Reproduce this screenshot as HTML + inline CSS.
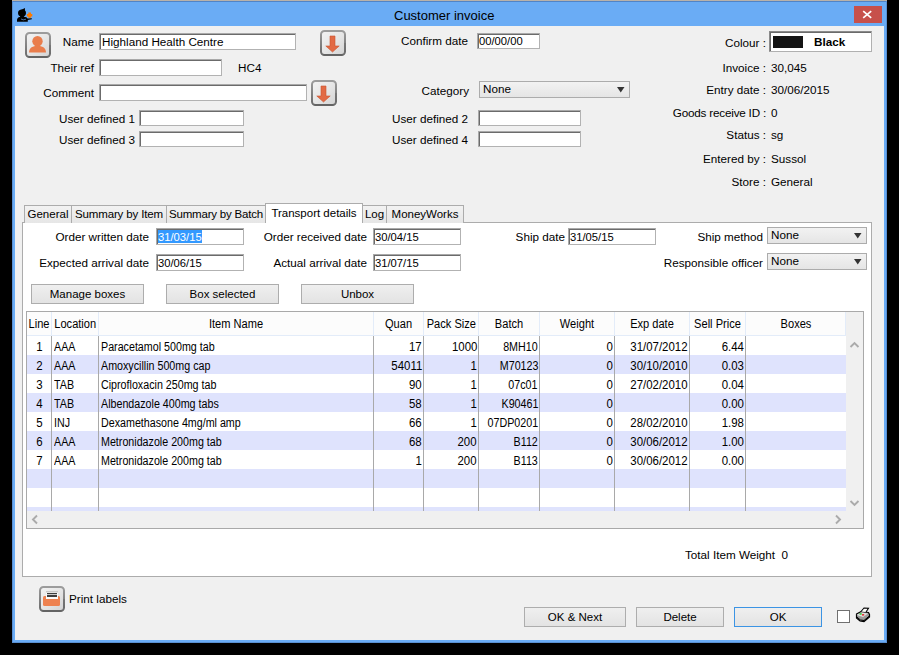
<!DOCTYPE html>
<html><head><meta charset="utf-8">
<style>
html,body{margin:0;padding:0;}
body{width:899px;height:655px;background:#000;position:relative;overflow:hidden;font-family:"Liberation Sans",sans-serif;}
#win{position:absolute;left:12px;top:0;width:875px;height:643px;background:#6aacf5;}
#topline{position:absolute;left:12px;top:0;width:875px;height:1px;background:#b9b2aa;}
#client{position:absolute;left:15px;top:26px;width:869px;height:614px;background:#f0f0f0;}
.a{position:absolute;}
.t{position:absolute;font-size:11.7px;line-height:14px;white-space:pre;color:#000;}
.r{text-align:right;}
.inp{position:absolute;box-sizing:border-box;background:#fff;border:1px solid #b2b2b2;border-top-color:#a9a9a9;border-left-color:#a9a9a9;box-shadow:inset 1px 1px 0 #6b6b6b;}
.dd{position:absolute;box-sizing:border-box;border:1px solid #acacac;background:linear-gradient(#f2f2f2,#e5e5e5);}
.dd .arr{position:absolute;width:0;height:0;border-left:3.5px solid transparent;border-right:3.5px solid transparent;border-top:5px solid #333;}
.btn{position:absolute;box-sizing:border-box;border:1px solid #adadad;background:linear-gradient(#efefef,#e3e3e3);font-size:11.5px;text-align:center;white-space:pre;}
.ib{position:absolute;box-sizing:border-box;width:26px;height:26px;border-radius:4px;border:2px solid #787878;border-bottom-color:#5a5a5a;border-right-color:#8a8a8a;background:linear-gradient(135deg,#f0f0f0 0%,#e4e4e4 50%,#d6d6d6 100%);}
.tab{position:absolute;box-sizing:border-box;top:205px;height:18px;border:1px solid #acacac;border-bottom:none;background:linear-gradient(#f2f2f2,#e6e6e6);font-size:11.5px;line-height:16px;white-space:pre;text-align:center;}
.tbl{position:absolute;font-size:11px;white-space:pre;}
.th{position:absolute;font-size:12.3px;line-height:14px;white-space:pre;text-align:center;transform:scaleX(0.9);}
.td{position:absolute;font-size:12.3px;line-height:14px;white-space:pre;transform:scaleX(0.87);}
.td.n{transform:scaleX(0.93);}
</style></head><body>
<div id="win"></div>
<div id="topline"></div>
<div class="a" style="left:12px;top:1px;width:875px;height:1px;background:#5184c6;"></div>
<div class="a" style="left:12px;top:1px;width:1px;height:642px;background:#5a90d2;"></div>
<div class="a" style="left:886px;top:1px;width:1px;height:642px;background:#5a90d2;"></div>
<div class="a" style="left:12px;top:642px;width:875px;height:1px;background:#5a90d2;"></div>
<div id="client"></div>

<!-- title bar -->
<svg class="a" style="left:14px;top:4px" width="24" height="22"><ellipse cx="8" cy="9" rx="4" ry="3.6" fill="#000"/><path d="M6 6.5 L11 4 L10.8 7.5 Z" fill="#000"/><path d="M6.2 12 L9.8 12 L10.2 13.2 L6 13.2 Z" fill="#000"/><path d="M3 17.8 L3 15.8 Q3.5 13 7 12.8 L10 12.8 Q13 13 13.6 14.5 L17.8 14.2 L17.8 15.2 L13.8 16 L13.8 17.8 Z" fill="#000"/><path d="M7 15 Q9 16.6 12 15.2" fill="none" stroke="#5a88c8" stroke-width="0.8"/><path d="M14.3 8.6 H17 V9.9 H18.3 V12.6 H17 V13.8 H14.3 V12.6 H12.9 V9.9 H14.3 Z" fill="#ff7b00"/></svg>
<div class="t" style="left:394px;top:7px;font-size:13px;line-height:17px;">Customer invoice</div>
<div class="a" style="left:854px;top:6px;width:28px;height:17px;background:#c7504b;"></div>
<svg class="a" style="left:854px;top:6px" width="28" height="17"><path d="M9.2 5.2 L17.2 11.8 M17.2 5.2 L9.2 11.8" stroke="#fff" stroke-width="1.7"/></svg>

<!-- header left -->
<div class="a" style="left:25px;top:32px;width:26px;height:26px;"><svg width="26" height="26" style="position:absolute;left:0;top:0"><defs><linearGradient id="bg" x1="0" y1="0" x2="1" y2="1"><stop offset="0" stop-color="#f3f3f3"/><stop offset="0.5" stop-color="#e6e6e6"/><stop offset="1" stop-color="#d3d3d3"/></linearGradient></defs><linearGradient id="sg" x1="0" y1="0" x2="0" y2="1"><stop offset="0" stop-color="#9c9c9c"/><stop offset="1" stop-color="#6a6a6a"/></linearGradient><rect x="1" y="1" width="24" height="24" rx="3.5" fill="url(#bg)" stroke="url(#sg)" stroke-width="2"/><path d="M3.5 25 H22.5" stroke="#5e5e5e" stroke-width="1"/><path d="M25 13 V22" stroke="#6a6a6a" stroke-width="1"/><circle cx="12.5" cy="9.2" r="5.2" fill="#e97d4c"/><path d="M4 20.6 C4 15.8 8 13.8 12.5 13.8 C17 13.8 21 15.8 21 20.6 Z" fill="#e97d4c"/></svg></div>
<div class="t r" style="left:0;width:94px;top:35px;">Name</div>
<div class="inp" style="left:99px;top:33px;width:197px;height:17px;"></div>
<div class="t" style="left:102px;top:35px;">Highland Health Centre</div>
<div class="a" style="left:320px;top:30px;width:26px;height:26px;"><svg width="26" height="26" style="position:absolute;left:0;top:0"><defs><linearGradient id="bg" x1="0" y1="0" x2="1" y2="1"><stop offset="0" stop-color="#f3f3f3"/><stop offset="0.5" stop-color="#e6e6e6"/><stop offset="1" stop-color="#d3d3d3"/></linearGradient></defs><linearGradient id="sg" x1="0" y1="0" x2="0" y2="1"><stop offset="0" stop-color="#9c9c9c"/><stop offset="1" stop-color="#6a6a6a"/></linearGradient><rect x="1" y="1" width="24" height="24" rx="3.5" fill="url(#bg)" stroke="url(#sg)" stroke-width="2"/><path d="M3.5 25 H22.5" stroke="#5e5e5e" stroke-width="1"/><path d="M25 13 V22" stroke="#6a6a6a" stroke-width="1"/><path d="M10 6 H15 V16 H19.2 L12.5 22 L5.8 16 H10 Z" fill="#e26a45" stroke="#c9542f" stroke-width="0.6" stroke-linejoin="round"/></svg></div>
<div class="t r" style="left:0;width:94px;top:61px;">Their ref</div>
<div class="inp" style="left:99px;top:59px;width:123px;height:17px;"></div>
<div class="t" style="left:238px;top:61px;">HC4</div>
<div class="t r" style="left:0;width:94px;top:86px;">Comment</div>
<div class="inp" style="left:99px;top:84px;width:208px;height:17px;"></div>
<div class="a" style="left:311px;top:80px;width:26px;height:26px;"><svg width="26" height="26" style="position:absolute;left:0;top:0"><defs><linearGradient id="bg" x1="0" y1="0" x2="1" y2="1"><stop offset="0" stop-color="#f3f3f3"/><stop offset="0.5" stop-color="#e6e6e6"/><stop offset="1" stop-color="#d3d3d3"/></linearGradient></defs><linearGradient id="sg" x1="0" y1="0" x2="0" y2="1"><stop offset="0" stop-color="#9c9c9c"/><stop offset="1" stop-color="#6a6a6a"/></linearGradient><rect x="1" y="1" width="24" height="24" rx="3.5" fill="url(#bg)" stroke="url(#sg)" stroke-width="2"/><path d="M3.5 25 H22.5" stroke="#5e5e5e" stroke-width="1"/><path d="M25 13 V22" stroke="#6a6a6a" stroke-width="1"/><path d="M10 6 H15 V16 H19.2 L12.5 22 L5.8 16 H10 Z" fill="#e26a45" stroke="#c9542f" stroke-width="0.6" stroke-linejoin="round"/></svg></div>
<div class="t r" style="left:0;width:135px;top:112px;">User defined 1</div>
<div class="inp" style="left:139px;top:110px;width:105px;height:16px;"></div>
<div class="t r" style="left:0;width:135px;top:133px;">User defined 3</div>
<div class="inp" style="left:139px;top:131px;width:105px;height:16px;"></div>

<!-- header middle -->
<div class="t r" style="left:300px;width:168px;top:34px;">Confirm date</div>
<div class="inp" style="left:477px;top:33px;width:63px;height:16px;"></div>
<div class="t" style="left:479px;top:34px;transform:scaleX(0.96);transform-origin:left;">00/00/00</div>
<div class="t r" style="left:300px;width:169px;top:84px;">Category</div>
<div class="dd" style="left:479px;top:81px;width:151px;height:17px;"><div class="t" style="left:3px;top:0px;">None</div><svg class="a" style="left:137px;top:5px" width="8" height="6"><path d="M0 0 H7.5 L3.75 5.5 Z" fill="#333"/></svg></div>
<div class="t r" style="left:300px;width:168px;top:112px;">User defined 2</div>
<div class="inp" style="left:478px;top:110px;width:103px;height:16px;"></div>
<div class="t r" style="left:300px;width:168px;top:133px;">User defined 4</div>
<div class="inp" style="left:478px;top:131px;width:103px;height:16px;"></div>

<!-- header right -->
<div class="t r" style="left:600px;width:166px;top:36px;">Colour :</div>
<div class="inp" style="left:769px;top:31px;width:103px;height:21px;border-top:1px solid #8a8a8a;border-left:1px solid #8a8a8a;border-right:1px solid #b0b0b0;border-bottom:1px solid #b0b0b0;"></div>
<div class="a" style="left:773px;top:36px;width:30px;height:12px;background:#141414;"></div>
<div class="t" style="left:814px;top:35px;font-weight:bold;">Black</div>
<div class="t r" style="left:600px;width:166px;top:61px;">Invoice :</div>
<div class="t" style="left:771px;top:61px;">30,045</div>
<div class="t r" style="left:600px;width:166px;top:83px;">Entry date :</div>
<div class="t" style="left:771px;top:83px;">30/06/2015</div>
<div class="t r" style="left:600px;width:166px;top:106px;letter-spacing:-0.2px;">Goods receive ID :</div>
<div class="t" style="left:771px;top:106px;">0</div>
<div class="t r" style="left:600px;width:166px;top:128px;">Status :</div>
<div class="t" style="left:771px;top:128px;">sg</div>
<div class="t r" style="left:600px;width:166px;top:152px;">Entered by :</div>
<div class="t" style="left:771px;top:152px;">Sussol</div>
<div class="t r" style="left:600px;width:166px;top:175px;">Store :</div>
<div class="t" style="left:771px;top:175px;">General</div>

<!-- tab panel -->
<div class="a" style="left:22px;top:222px;width:848px;height:353px;border:1px solid #acacac;background:#fff;"></div>
<div class="tab" style="left:24px;width:48px;">General</div>
<div class="tab" style="left:71px;width:96px;letter-spacing:-0.15px;">Summary by Item</div>
<div class="tab" style="left:166px;width:100px;letter-spacing:-0.2px;">Summary by Batch</div>
<div class="tab" style="left:386px;width:78px;">MoneyWorks</div>
<div class="tab" style="left:362px;width:25px;">Log</div>
<div class="tab" style="left:265px;top:203px;width:98px;height:20px;background:#fff;line-height:18px;">Transport details</div>

<!-- transport form -->
<div class="t r" style="left:0;width:149px;top:230px;">Order written date</div>
<div class="inp" style="left:156px;top:228px;width:88px;height:17px;"></div>
<div class="a" style="left:158px;top:230px;width:44px;height:13px;background:#3399ff;"></div>
<div class="t" style="left:158px;top:230px;color:#fff;transform:scaleX(0.96);transform-origin:left;">31/03/15</div>
<div class="t r" style="left:0;width:149px;top:256px;">Expected arrival date</div>
<div class="inp" style="left:156px;top:254px;width:88px;height:17px;"></div>
<div class="t" style="left:158px;top:256px;transform:scaleX(0.96);transform-origin:left;">30/06/15</div>
<div class="t r" style="left:200px;width:167px;top:230px;">Order received date</div>
<div class="inp" style="left:373px;top:228px;width:88px;height:17px;"></div>
<div class="t" style="left:375px;top:230px;transform:scaleX(0.96);transform-origin:left;">30/04/15</div>
<div class="t r" style="left:200px;width:167px;top:256px;">Actual arrival date</div>
<div class="inp" style="left:373px;top:254px;width:88px;height:17px;"></div>
<div class="t" style="left:375px;top:256px;transform:scaleX(0.96);transform-origin:left;">31/07/15</div>
<div class="t r" style="left:450px;width:115px;top:230px;">Ship date</div>
<div class="inp" style="left:568px;top:228px;width:88px;height:17px;"></div>
<div class="t" style="left:570px;top:230px;transform:scaleX(0.96);transform-origin:left;">31/05/15</div>
<div class="t r" style="left:600px;width:163px;top:230px;">Ship method</div>
<div class="dd" style="left:767px;top:227px;width:100px;height:17px;"><div class="t" style="left:3px;top:0px;">None</div><svg class="a" style="left:86px;top:5px" width="8" height="6"><path d="M0 0 H7.5 L3.75 5.5 Z" fill="#333"/></svg></div>
<div class="t r" style="left:600px;width:163px;top:256px;">Responsible officer</div>
<div class="dd" style="left:767px;top:253px;width:100px;height:17px;"><div class="t" style="left:3px;top:0px;">None</div><svg class="a" style="left:86px;top:5px" width="8" height="6"><path d="M0 0 H7.5 L3.75 5.5 Z" fill="#333"/></svg></div>

<div class="btn" style="left:31px;top:284px;width:113px;height:20px;line-height:18px;">Manage boxes</div>
<div class="btn" style="left:166px;top:284px;width:113px;height:20px;line-height:18px;">Box selected</div>
<div class="btn" style="left:301px;top:284px;width:113px;height:20px;line-height:18px;">Unbox</div>

<!-- table -->
<div class="a" style="left:26px;top:311px;width:836px;height:216px;border:1px solid #a9a9a9;background:#fff;"></div>
<div class="a" style="left:27px;top:312px;width:819px;height:23px;background:#fcfcfc;"></div>
<div class="a" style="left:27px;top:335px;width:819px;height:1px;background:#e3ecf9;"></div>
<div class="a" style="left:27px;top:355px;width:819px;height:19px;background:#dfe3fd;"></div>
<div class="a" style="left:27px;top:393px;width:819px;height:19px;background:#dfe3fd;"></div>
<div class="a" style="left:27px;top:431px;width:819px;height:19px;background:#dfe3fd;"></div>
<div class="a" style="left:27px;top:469px;width:819px;height:19px;background:#dfe3fd;"></div>
<div class="a" style="left:27px;top:507px;width:819px;height:4px;background:#dfe3fd;"></div>
<div class="a" style="left:51px;top:312px;width:1px;height:23px;background:#e3ecf9;"></div>
<div class="a" style="left:98px;top:312px;width:1px;height:23px;background:#e3ecf9;"></div>
<div class="a" style="left:373px;top:312px;width:1px;height:23px;background:#e3ecf9;"></div>
<div class="a" style="left:423px;top:312px;width:1px;height:23px;background:#e3ecf9;"></div>
<div class="a" style="left:478px;top:312px;width:1px;height:23px;background:#e3ecf9;"></div>
<div class="a" style="left:539px;top:312px;width:1px;height:23px;background:#e3ecf9;"></div>
<div class="a" style="left:614px;top:312px;width:1px;height:23px;background:#e3ecf9;"></div>
<div class="a" style="left:689px;top:312px;width:1px;height:23px;background:#e3ecf9;"></div>
<div class="a" style="left:745px;top:312px;width:1px;height:23px;background:#e3ecf9;"></div>
<div class="a" style="left:845px;top:312px;width:1px;height:23px;background:#e3ecf9;"></div>
<div class="a" style="left:51px;top:336px;width:1px;height:175px;background:#a9a9a9;"></div>
<div class="a" style="left:98px;top:336px;width:1px;height:175px;background:#a9a9a9;"></div>
<div class="a" style="left:373px;top:336px;width:1px;height:175px;background:#a9a9a9;"></div>
<div class="a" style="left:423px;top:336px;width:1px;height:175px;background:#a9a9a9;"></div>
<div class="a" style="left:478px;top:336px;width:1px;height:175px;background:#a9a9a9;"></div>
<div class="a" style="left:539px;top:336px;width:1px;height:175px;background:#a9a9a9;"></div>
<div class="a" style="left:614px;top:336px;width:1px;height:175px;background:#a9a9a9;"></div>
<div class="a" style="left:689px;top:336px;width:1px;height:175px;background:#a9a9a9;"></div>
<div class="a" style="left:745px;top:336px;width:1px;height:175px;background:#a9a9a9;"></div>
<div class="th" style="left:27px;width:24px;top:317px;">Line</div>
<div class="th" style="left:52px;width:46px;top:317px;">Location</div>
<div class="th" style="left:99px;width:274px;top:317px;">Item Name</div>
<div class="th" style="left:374px;width:49px;top:317px;">Quan</div>
<div class="th" style="left:424px;width:54px;top:317px;">Pack Size</div>
<div class="th" style="left:479px;width:60px;top:317px;">Batch</div>
<div class="th" style="left:540px;width:74px;top:317px;">Weight</div>
<div class="th" style="left:615px;width:74px;top:317px;">Exp date</div>
<div class="th" style="left:690px;width:55px;top:317px;">Sell Price</div>
<div class="th" style="left:746px;width:100px;top:317px;">Boxes</div>
<div class="td n" style="left:28px;width:23px;top:340px;text-align:center;transform-origin:center;">1</div>
<div class="td " style="left:54px;top:340px;transform-origin:left;">AAA</div>
<div class="td " style="left:101px;top:340px;transform-origin:left;">Paracetamol 500mg tab</div>
<div class="td n" style="right:477px;top:340px;transform-origin:right;">17</div>
<div class="td n" style="right:422px;top:340px;transform-origin:right;">1000</div>
<div class="td " style="right:361px;top:340px;transform-origin:right;">8MH10</div>
<div class="td n" style="right:286px;top:340px;transform-origin:right;">0</div>
<div class="td n" style="right:211px;top:340px;transform-origin:right;">31/07/2012</div>
<div class="td n" style="right:155px;top:340px;transform-origin:right;">6.44</div>
<div class="td n" style="left:28px;width:23px;top:359px;text-align:center;transform-origin:center;">2</div>
<div class="td " style="left:54px;top:359px;transform-origin:left;">AAA</div>
<div class="td " style="left:101px;top:359px;transform-origin:left;">Amoxycillin 500mg cap</div>
<div class="td n" style="right:477px;top:359px;transform-origin:right;">54011</div>
<div class="td n" style="right:422px;top:359px;transform-origin:right;">1</div>
<div class="td " style="right:361px;top:359px;transform-origin:right;">M70123</div>
<div class="td n" style="right:286px;top:359px;transform-origin:right;">0</div>
<div class="td n" style="right:211px;top:359px;transform-origin:right;">30/10/2010</div>
<div class="td n" style="right:155px;top:359px;transform-origin:right;">0.03</div>
<div class="td n" style="left:28px;width:23px;top:378px;text-align:center;transform-origin:center;">3</div>
<div class="td " style="left:54px;top:378px;transform-origin:left;">TAB</div>
<div class="td " style="left:101px;top:378px;transform-origin:left;">Ciprofloxacin 250mg tab</div>
<div class="td n" style="right:477px;top:378px;transform-origin:right;">90</div>
<div class="td n" style="right:422px;top:378px;transform-origin:right;">1</div>
<div class="td " style="right:361px;top:378px;transform-origin:right;">07c01</div>
<div class="td n" style="right:286px;top:378px;transform-origin:right;">0</div>
<div class="td n" style="right:211px;top:378px;transform-origin:right;">27/02/2010</div>
<div class="td n" style="right:155px;top:378px;transform-origin:right;">0.04</div>
<div class="td n" style="left:28px;width:23px;top:397px;text-align:center;transform-origin:center;">4</div>
<div class="td " style="left:54px;top:397px;transform-origin:left;">TAB</div>
<div class="td " style="left:101px;top:397px;transform-origin:left;">Albendazole 400mg tabs</div>
<div class="td n" style="right:477px;top:397px;transform-origin:right;">58</div>
<div class="td n" style="right:422px;top:397px;transform-origin:right;">1</div>
<div class="td " style="right:361px;top:397px;transform-origin:right;">K90461</div>
<div class="td n" style="right:286px;top:397px;transform-origin:right;">0</div>
<div class="td n" style="right:155px;top:397px;transform-origin:right;">0.00</div>
<div class="td n" style="left:28px;width:23px;top:416px;text-align:center;transform-origin:center;">5</div>
<div class="td " style="left:54px;top:416px;transform-origin:left;">INJ</div>
<div class="td " style="left:101px;top:416px;transform-origin:left;">Dexamethasone 4mg/ml amp</div>
<div class="td n" style="right:477px;top:416px;transform-origin:right;">66</div>
<div class="td n" style="right:422px;top:416px;transform-origin:right;">1</div>
<div class="td " style="right:361px;top:416px;transform-origin:right;">07DP0201</div>
<div class="td n" style="right:286px;top:416px;transform-origin:right;">0</div>
<div class="td n" style="right:211px;top:416px;transform-origin:right;">28/02/2010</div>
<div class="td n" style="right:155px;top:416px;transform-origin:right;">1.98</div>
<div class="td n" style="left:28px;width:23px;top:435px;text-align:center;transform-origin:center;">6</div>
<div class="td " style="left:54px;top:435px;transform-origin:left;">AAA</div>
<div class="td " style="left:101px;top:435px;transform-origin:left;">Metronidazole 200mg tab</div>
<div class="td n" style="right:477px;top:435px;transform-origin:right;">68</div>
<div class="td n" style="right:422px;top:435px;transform-origin:right;">200</div>
<div class="td " style="right:361px;top:435px;transform-origin:right;">B112</div>
<div class="td n" style="right:286px;top:435px;transform-origin:right;">0</div>
<div class="td n" style="right:211px;top:435px;transform-origin:right;">30/06/2012</div>
<div class="td n" style="right:155px;top:435px;transform-origin:right;">1.00</div>
<div class="td n" style="left:28px;width:23px;top:454px;text-align:center;transform-origin:center;">7</div>
<div class="td " style="left:54px;top:454px;transform-origin:left;">AAA</div>
<div class="td " style="left:101px;top:454px;transform-origin:left;">Metronidazole 200mg tab</div>
<div class="td n" style="right:477px;top:454px;transform-origin:right;">1</div>
<div class="td n" style="right:422px;top:454px;transform-origin:right;">200</div>
<div class="td " style="right:361px;top:454px;transform-origin:right;">B113</div>
<div class="td n" style="right:286px;top:454px;transform-origin:right;">0</div>
<div class="td n" style="right:211px;top:454px;transform-origin:right;">30/06/2012</div>
<div class="td n" style="right:155px;top:454px;transform-origin:right;">0.00</div>
<div class="a" style="left:846px;top:312px;width:17px;height:216px;background:#f0f0f0;"></div>
<div class="a" style="left:27px;top:511px;width:836px;height:17px;background:#f0f0f0;"></div>
<svg class="a" style="left:846px;top:336px" width="17" height="17"><path d="M4.5 11 L8.5 7 L12.5 11" fill="none" stroke="#ababab" stroke-width="1.9"/></svg>
<svg class="a" style="left:846px;top:494px" width="17" height="17"><path d="M4.5 7 L8.5 11 L12.5 7" fill="none" stroke="#ababab" stroke-width="1.9"/></svg>
<svg class="a" style="left:27px;top:511px" width="17" height="17"><path d="M10 4.5 L6 8.5 L10 12.5" fill="none" stroke="#ababab" stroke-width="1.9"/></svg>
<svg class="a" style="left:829px;top:511px" width="17" height="17"><path d="M7 4.5 L11 8.5 L7 12.5" fill="none" stroke="#ababab" stroke-width="1.9"/></svg>

<!-- footer -->
<div class="t" style="left:685px;top:548px;">Total Item Weight  0</div>
<div class="a" style="left:39px;top:586px;width:26px;height:26px;"><svg width="26" height="26" style="position:absolute;left:0;top:0"><defs><linearGradient id="bg" x1="0" y1="0" x2="1" y2="1"><stop offset="0" stop-color="#f3f3f3"/><stop offset="0.5" stop-color="#e6e6e6"/><stop offset="1" stop-color="#d3d3d3"/></linearGradient></defs><linearGradient id="sg" x1="0" y1="0" x2="0" y2="1"><stop offset="0" stop-color="#9c9c9c"/><stop offset="1" stop-color="#6a6a6a"/></linearGradient><rect x="1" y="1" width="24" height="24" rx="3.5" fill="url(#bg)" stroke="url(#sg)" stroke-width="2"/><path d="M3.5 25 H22.5" stroke="#5e5e5e" stroke-width="1"/><path d="M25 13 V22" stroke="#6a6a6a" stroke-width="1"/><rect x="4" y="10" width="17" height="10" rx="1.5" fill="#ee8250"/><rect x="7" y="5" width="12" height="8" fill="#fafafa"/><rect x="7" y="5" width="12" height="1.5" fill="#c8c8c8"/><rect x="8" y="7.2" width="10" height="1" fill="#111"/><rect x="8" y="9.2" width="10" height="1.6" fill="#111"/></svg></div>
<div class="t" style="left:69px;top:592px;">Print labels</div>
<div class="btn" style="left:524px;top:607px;width:102px;height:20px;line-height:18px;">OK &amp; Next</div>
<div class="btn" style="left:636px;top:607px;width:88px;height:20px;line-height:18px;">Delete</div>
<div class="btn" style="left:734px;top:607px;width:88px;height:20px;line-height:18px;border-color:#3c94e4;">OK</div>
<div class="a" style="left:837px;top:610px;width:11px;height:11px;border:1px solid #707070;background:#fff;"></div>
<svg class="a" style="left:855px;top:607px" width="16" height="16"><path d="M1.5 7 L6 4.5 L13.5 5.5 L14.5 7.5 L14.5 10 L9 14.5 L5 14 L1.5 11 Z" fill="#9a9a9a" stroke="#000" stroke-width="1.2"/><path d="M1.5 8 L6 5.5 L13 6.5 L8 10 Z" fill="#e0e0e0"/><path d="M1.8 10 L5.5 13 L9 13.5 L14.3 9" fill="none" stroke="#000" stroke-width="1"/><path d="M6 4.5 L9 1 L13.5 1.3 L11 5" fill="#fff" stroke="#000" stroke-width="1.1"/><rect x="4.5" y="6.3" width="2.2" height="1.3" fill="#10c010"/><rect x="7" y="7.2" width="2.2" height="1.3" fill="#e01010"/></svg>

</body></html>
